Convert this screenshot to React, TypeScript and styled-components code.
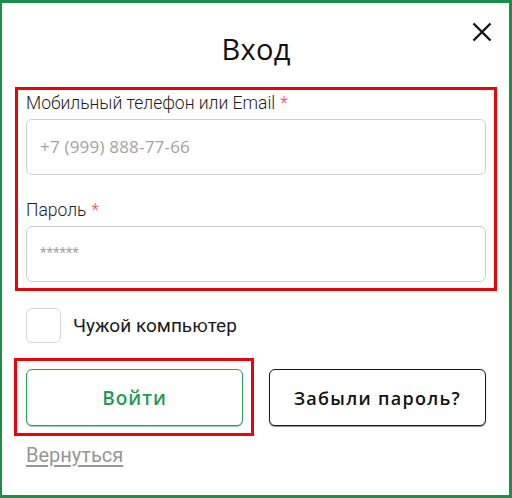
import React from 'react';
import styled, { createGlobalStyle } from 'styled-components';

const GlobalStyle = createGlobalStyle`
  html, body {
    margin: 0;
    padding: 0;
    background: #ffffff;
  }
  * {
    box-sizing: border-box;
  }
`;

const Frame = styled.div`
  width: 512px;
  height: 498px;
  border: 3px solid #1f8c49;
  border-left-width: 2px;
  padding: 0 12px 0 13px;
  display: flex;
  flex-direction: column;
  background: #ffffff;
`;

const Header = styled.header`
  height: 84px;
  display: grid;
  grid-template-columns: 1fr auto 1fr;
  align-items: start;
`;

const Title = styled.h1`
  grid-column: 2;
  margin: 26px 0 0;
  font-family: 'Open Sans', sans-serif;
  font-weight: 400;
  font-size: 29px;
  line-height: 40px;
  letter-spacing: 0.3px;
  color: #111111;
`;

const CloseButton = styled.button`
  grid-column: 3;
  justify-self: end;
  margin: 19px 5px 0 0;
  width: 20px;
  height: 20px;
  padding: 0;
  border: none;
  background: transparent;
  cursor: pointer;
  display: flex;
`;

const Highlight = styled.div`
  border: 3px solid #e8040f;
`;

const Fields = styled(Highlight)`
  padding: 3px 8px 6px;
  display: flex;
  flex-direction: column;
`;

const Label = styled.label<{ $gap?: number }>`
  margin-top: ${(p) => p.$gap ?? 0}px;
  font-family: Roboto, 'Liberation Sans', sans-serif;
  font-weight: 300;
  font-size: 17.5px;
  line-height: 20px;
  color: #1e1e1e;
`;

const Required = styled.span`
  color: #f0505a;
  margin-left: 5px;
`;

const Input = styled.input<{ $small?: boolean }>`
  margin-top: 6px;
  height: 56px;
  width: 100%;
  border: 1px solid #cfcfcf;
  border-radius: 6px;
  padding: 0 13px 2px;
  font-family: ${(p) => (p.$small ? 'Roboto, sans-serif' : "'Open Sans', sans-serif")};
  font-size: ${(p) => (p.$small ? 15 : 17)}px;
  letter-spacing: ${(p) => (p.$small ? 0 : 0.2)}px;
  color: #333333;
  outline: none;

  &::placeholder {
    color: #a3a3a3;
  }
`;

const CheckRow = styled.label`
  margin: 17px 0 0 11px;
  display: flex;
  align-items: center;
  gap: 12px;
  font-family: Roboto, 'Liberation Sans', sans-serif;
  font-size: 19px;
  color: #1a1a1a;
  cursor: pointer;
`;

const Box = styled.span`
  width: 35px;
  height: 35px;
  border: 1px solid #d6d6d6;
  border-radius: 6px;
`;

const Actions = styled.div`
  margin: 15px 0 0 -1px;
  padding-right: 11px;
  display: flex;
  align-items: flex-start;
  gap: 15px;
`;

const ButtonFrame = styled(Highlight)`
  padding: 8px 8px 7px 9px;
`;

const Button = styled.button<{ $primary?: boolean }>`
  height: 57px;
  width: 217px;
  border-radius: 6px;
  border: 1px solid ${(p) => (p.$primary ? '#1fa35c' : '#1a1a1a')};
  box-shadow: ${(p) => (p.$primary ? '0 1px 0 #9fd3b5' : '0 1px 1px #8a8a8a')};
  background: #ffffff;
  font-family: 'Open Sans', sans-serif;
  font-weight: 600;
  font-size: ${(p) => (p.$primary ? 19 : 18)}px;
  letter-spacing: ${(p) => (p.$primary ? 1 : 1.3)}px;
  color: ${(p) => (p.$primary ? '#1f9a58' : '#111111')};
  cursor: pointer;
`;

const ForgotButton = styled(Button)`
  margin-top: 11px;
`;

const BackLink = styled.a`
  align-self: flex-start;
  margin: 7px 0 0 11px;
  font-family: Roboto, 'Liberation Sans', sans-serif;
  font-size: 20px;
  line-height: 24px;
  color: #969696;
  text-decoration: underline;
  text-underline-offset: 3px;
  cursor: pointer;
`;

export default function App() {
  return (
    <>
      <GlobalStyle />
      <Frame>
        <Header>
          <Title>Вход</Title>
          <CloseButton aria-label="Закрыть">
            <svg width="20" height="20" viewBox="0 0 20 20">
              <path d="M1.5 1.5 L18.5 18.5 M18.5 1.5 L1.5 18.5" stroke="#111" strokeWidth="2.4" />
            </svg>
          </CloseButton>
        </Header>
        <Fields>
          <Label>
            Мобильный телефон или Email<Required>*</Required>
          </Label>
          <Input placeholder="+7 (999) 888-77-66" />
          <Label $gap={25}>
            Пароль<Required>*</Required>
          </Label>
          <Input type="password" placeholder="******" $small />
        </Fields>
        <CheckRow>
          <Box />
          Чужой компьютер
        </CheckRow>
        <Actions>
          <ButtonFrame>
            <Button $primary>Войти</Button>
          </ButtonFrame>
          <ForgotButton>Забыли пароль?</ForgotButton>
        </Actions>
        <BackLink>Вернуться</BackLink>
      </Frame>
    </>
  );
}
